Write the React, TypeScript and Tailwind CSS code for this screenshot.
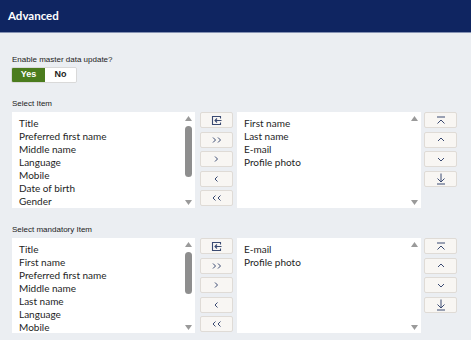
import React from "react";

const C = "#3a4a72";

function Btn({ children }: { children: React.ReactNode }) {
  return (
    <div className="w-[33px] h-[16px] bg-[#f8f6f3] border border-[#dfdbd6] rounded-[2px] flex items-center justify-center">
      {children}
    </div>
  );
}

function IconSwap() {
  return (
    <svg width="11" height="11" viewBox="0 0 11 11" fill="none" stroke={C} strokeWidth="1.1">
      <path d="M9.5 3.5V1.5H1.5V9.5H9.5V7.5" />
      <path d="M10.5 5.5H4M6 3.5L4 5.5L6 7.5" />
    </svg>
  );
}

function Dbl({ dir }: { dir: "r" | "l" }) {
  return (
    <svg width="10" height="6" viewBox="0 0 10 6" fill="none" stroke={C} strokeWidth="1">
      {dir === "r" ? (
        <>
          <path d="M1 0.5L3.5 3L1 5.5" />
          <path d="M6 0.5L8.5 3L6 5.5" />
        </>
      ) : (
        <>
          <path d="M3.5 0.5L1 3L3.5 5.5" />
          <path d="M8.5 0.5L6 3L8.5 5.5" />
        </>
      )}
    </svg>
  );
}

function Sgl({ dir }: { dir: "r" | "l" }) {
  return (
    <svg width="5" height="6" viewBox="0 0 5 6" fill="none" stroke={C} strokeWidth="1">
      {dir === "r" ? <path d="M1 0.5L3.5 3L1 5.5" /> : <path d="M3.5 0.5L1 3L3.5 5.5" />}
    </svg>
  );
}

function Top() {
  return (
    <svg width="10" height="9" viewBox="0 0 10 9" fill="none" stroke={C} strokeWidth="1">
      <path d="M1 1H9" />
      <path d="M1.5 7.5L5 4L8.5 7.5" />
    </svg>
  );
}
function Up() {
  return (
    <svg width="8" height="5" viewBox="0 0 8 5" fill="none" stroke={C} strokeWidth="1">
      <path d="M1 4L4 1L7 4" />
    </svg>
  );
}
function Down() {
  return (
    <svg width="8" height="5" viewBox="0 0 8 5" fill="none" stroke={C} strokeWidth="1">
      <path d="M1 1L4 4L7 1" />
    </svg>
  );
}
function Bottom() {
  return (
    <svg width="10" height="12" viewBox="0 0 10 12" fill="none" stroke={C} strokeWidth="1">
      <path d="M5 0.5V9" />
      <path d="M1.5 5.5L5 9L8.5 5.5" />
      <path d="M1 11H9" />
    </svg>
  );
}

function Tri({ up }: { up: boolean }) {
  return (
    <svg width="7" height="5" viewBox="0 0 7 5">
      <path d={up ? "M0 5L3.5 0L7 5Z" : "M0 0L3.5 5L7 0Z"} fill="#9a9a9a" />
    </svg>
  );
}

function List({
  items,
  thumb,
  thumbTop,
  h,
  w,
}: {
  items: string[];
  thumb?: number;
  thumbTop?: number;
  h: string;
  w: string;
}) {
  return (
    <div className={`${w} ${h} bg-white flex overflow-hidden`}>
      <div className="flex-1 pl-[7px] pt-[5px] text-[10px] leading-[13px] text-[#1e1e1e]">
        {items.map((t) => (
          <div key={t} className="whitespace-nowrap">
            {t}
          </div>
        ))}
      </div>
      <div className="w-[13px] flex flex-col items-center pt-[4px] pb-[3px]">
        <Tri up />
        {thumb ? (
          <div
            className="w-[7px] rounded-full bg-[#8e8e8e]"
            style={{ height: thumb, marginTop: thumbTop }}
          />
        ) : null}
        <div className="flex-1" />
        <Tri up={false} />
      </div>
    </div>
  );
}

function Section({
  label,
  left,
  right,
  thumb,
  h,
  mt,
}: {
  label: string;
  left: string[];
  right: string[];
  thumb: number;
  h: string;
  mt: string;
}) {
  return (
    <>
      <div className={`${mt} text-[8px] leading-[10px] text-[#222] pl-[1px]`} style={{ fontFamily: '"Liberation Sans", Arial, sans-serif' }}>
        {label}
      </div>
      <div className="mt-[3px] flex ml-[1px]">
        <List items={left} thumb={thumb} thumbTop={5} h={h} w="w-[183px]" />
        <div className="ml-[5px] flex flex-col gap-[3.5px]">
          <Btn>
            <IconSwap />
          </Btn>
          <Btn>
            <Dbl dir="r" />
          </Btn>
          <Btn>
            <Sgl dir="r" />
          </Btn>
          <Btn>
            <Sgl dir="l" />
          </Btn>
          <Btn>
            <Dbl dir="l" />
          </Btn>
        </div>
        <div className="ml-[4px]">
          <List items={right} h={h} w="w-[184px]" />
        </div>
        <div className="ml-[3px] flex flex-col gap-[3.5px]">
          <Btn>
            <Top />
          </Btn>
          <Btn>
            <Up />
          </Btn>
          <Btn>
            <Down />
          </Btn>
          <Btn>
            <Bottom />
          </Btn>
        </div>
      </div>
    </>
  );
}

export default function App() {
  return (
    <div
      className="w-[471px] h-[340px] bg-[#ebeef2] overflow-hidden"
      style={{ fontFamily: 'Lato, "Noto Sans", sans-serif' }}
    >
      <div className="h-[33px] bg-[#0f2561] border-b border-[#8592b3] flex items-center pl-[8px]">
        <span className="text-white font-bold text-[11.5px]">Advanced</span>
      </div>
      <div className="pl-[11px]">
        <div
          className="mt-[22px] text-[8px] leading-[10px] text-[#222] pl-[1px]"
          style={{ fontFamily: '"Liberation Sans", Arial, sans-serif' }}
        >
          Enable master data update?
        </div>
        <div
          className="mt-[2px] flex w-[66px] h-[16px] rounded-[2px] overflow-hidden border border-[#d9d9d9] text-[9px] font-bold"
          style={{ fontFamily: '"Liberation Sans", Arial, sans-serif' }}
        >
          <div className="w-[33px] bg-[#4b7c1e] text-white flex items-center justify-center">Yes</div>
          <div className="flex-1 bg-white text-[#222] flex items-center justify-center">No</div>
        </div>
        <Section
          mt="mt-[16px]"
          label="Select Item"
          left={["Title", "Preferred first name", "Middle name", "Language", "Mobile", "Date of birth", "Gender"]}
          right={["First name", "Last name", "E-mail", "Profile photo"]}
          thumb={51}
          h="h-[96px]"
        />
        <Section
          mt="mt-[17px]"
          label="Select mandatory Item"
          left={["Title", "First name", "Preferred first name", "Middle name", "Last name", "Language", "Mobile"]}
          right={["E-mail", "Profile photo"]}
          thumb={42}
          h="h-[95px]"
        />
      </div>
    </div>
  );
}
